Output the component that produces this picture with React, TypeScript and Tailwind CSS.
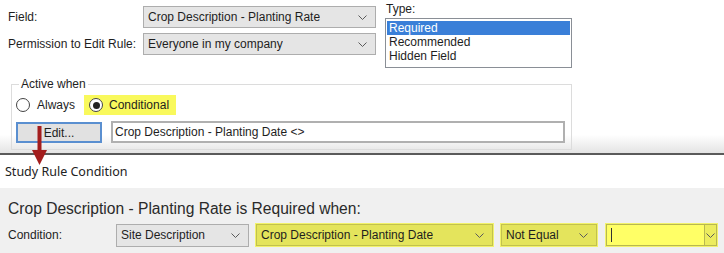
import React from 'react';

const Chevron: React.FC = () => (
  <svg width="9" height="5" viewBox="0 0 9 5" className="shrink-0">
    <path d="M0.5 0.5 L4.5 4.5 L8.5 0.5" fill="none" stroke="#5a5a5a" strokeWidth="1" />
  </svg>
);

type SelectProps = { value: string; className?: string };

const Select: React.FC<SelectProps> = ({ value, className = '' }) => (
  <div className={`flex items-center justify-between border pl-[4px] pr-[8px] ${className}`}>
    <span className="truncate">{value}</span>
    <Chevron />
  </div>
);

const Radio: React.FC<{ checked?: boolean }> = ({ checked }) => (
  <span className="w-[14px] h-[14px] rounded-full border border-[#444] bg-white flex items-center justify-center shrink-0">
    {checked && <span className="w-[7px] h-[7px] rounded-full bg-[#222]" />}
  </span>
);

const App: React.FC = () => {
  return (
    <div className="w-[724px] h-[253px] bg-white overflow-hidden relative font-['Liberation_Sans',Arial,sans-serif] text-[12px] text-[#1e1e1e]">
      {/* rule editor */}
      <div className="h-[155px] bg-gradient-to-b from-white from-[88%] to-[#e4e4e4] border-b-2 border-[#5a5a5a]">
        <div className="flex pt-[2px] pl-[8px]">
          <div className="mt-[4px] flex flex-col gap-[5px]">
            <div className="flex items-center h-[22px]">
              <span className="w-[135px]">Field:</span>
              <Select value="Crop Description - Planting Rate" className="w-[233px] h-[22px] bg-[#e5e5e5] border-[#adadad]" />
            </div>
            <div className="flex items-center h-[22px]">
              <span className="w-[135px]">Permission to Edit Rule:</span>
              <Select value="Everyone in my company" className="w-[233px] h-[22px] bg-[#e5e5e5] border-[#adadad]" />
            </div>
          </div>
          <div className="ml-[9px]">
            <div className="h-[14px] leading-[14px] pl-[1px]">Type:</div>
            <div className="mt-[2px] w-[187px] h-[50px] border border-[#8a8f96] bg-white pt-[2px] px-[1px] leading-[14px]">
              <div className="bg-[#3a7fd8] text-white pl-[2px] h-[14px]">Required</div>
              <div className="pl-[2px] h-[14px]">Recommended</div>
              <div className="pl-[2px] h-[14px]">Hidden Field</div>
            </div>
          </div>
        </div>

        <fieldset className="ml-[11px] mt-[9px] w-[561px] h-[73px] border border-[#dcdcdc] px-[4px]">
          <legend className="ml-[3px] px-[2px] leading-[14px]">Active when</legend>
          <div className="mt-[4px] h-[20px] flex items-center">
            <Radio />
            <span className="ml-[7px]">Always</span>
            <span className="ml-[9px] h-[20px] w-[92px] bg-[#f9f95c] flex items-center pl-[5px]">
              <Radio checked />
              <span className="ml-[6px]">Conditional</span>
            </span>
          </div>
          <div className="mt-[6px] flex items-center">
            <button className="w-[86px] h-[21px] bg-[#e1e1e1] border-2 border-[#5a8fd0] text-[#1e1e1e]">Edit...</button>
            <div className="ml-[9px] w-[454px] h-[22px] border-2 border-[#b0b0b0] bg-white flex items-center pl-[2px]">
              Crop Description - Planting Date &lt;&gt;
            </div>
          </div>
        </fieldset>
      </div>

      {/* condition dialog */}
      <div className="h-[33px] flex items-center pl-[5px] pt-[2px] font-['Noto_Sans',sans-serif] text-[12.5px] text-[#222]">
        Study Rule Condition
      </div>
      <div className="h-[65px] bg-[#f0f0f0] pt-[12px]">
        <div className="pl-[8px] text-[15.6px] leading-[18px] text-[#2a2a2a]">
          Crop Description - Planting Rate is Required when:
        </div>
        <div className="mt-[5px] flex items-center h-[24px] pl-[8px]">
          <span className="w-[108px]">Condition:</span>
          <Select value="Site Description" className="w-[133px] h-[23px] bg-[#e5e5e5] border-[#adadad]" />
          <div className="ml-[6px] h-[24px] bg-[#f2f26a] p-[1px]">
            <Select value="Crop Description - Planting Date" className="w-[237px] h-[22px] bg-[#e4e45c] border-[#c2c24e]" />
          </div>
          <div className="ml-[6px] h-[24px] bg-[#f2f26a] p-[1px]">
            <Select value="Not Equal" className="w-[96px] h-[22px] bg-[#e4e45c] border-[#c2c24e]" />
          </div>
          <div className="ml-[7px] h-[24px] w-[113px] bg-[#f2f26a] p-[1px]">
            <div className="h-[22px] border border-[#b8b850] bg-[#ffff66] flex items-center justify-between">
              <span className="ml-[4px] w-px h-[14px] bg-[#333]" />
              <span className="w-[12px] h-[20px] border-l border-[#b8b850] bg-[#ecec5e] flex items-center justify-center">
                <Chevron />
              </span>
            </div>
          </div>
        </div>
      </div>

      {/* pointer arrow */}
      <svg className="absolute left-[31px] top-[126px]" width="17" height="40" viewBox="0 0 17 40">
        <rect x="6.5" y="0" width="4" height="26" fill="#a31d1d" />
        <path d="M1 24 L16 24 L8.5 39 Z" fill="#a31d1d" />
      </svg>
    </div>
  );
};

export default App;
